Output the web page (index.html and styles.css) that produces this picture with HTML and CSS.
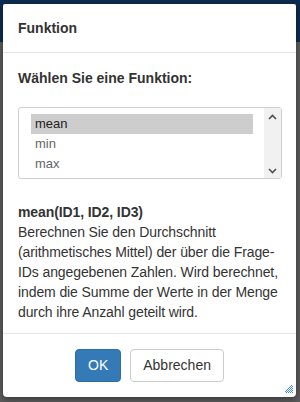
FILE: index.html
```html
<!DOCTYPE html>
<html lang="de">
<head>
<meta charset="utf-8">
<title>Funktion</title>
<link rel="stylesheet" href="styles.css">
</head>
<body>
<div class="backdrop">
  <div class="topbar"></div>
  <div class="page"></div>
</div>
<div class="modal">
  <div class="modal-header">
    <h4 class="modal-title">Funktion</h4>
  </div>
  <div class="modal-body">
    <div class="label">Wählen Sie eine Funktion:</div>
    <div class="listbox">
      <ul class="options">
        <li class="option selected">mean</li>
        <li class="option">min</li>
        <li class="option">max</li>
      </ul>
      <div class="scrollbar">
        <svg class="arrow" width="9" height="6" viewBox="0 0 9 6"><path d="M1 5 L4.5 1.5 L8 5" fill="none" stroke="#505050" stroke-width="1.6"/></svg>
        <svg class="arrow" width="9" height="6" viewBox="0 0 9 6"><path d="M1 1 L4.5 4.5 L8 1" fill="none" stroke="#505050" stroke-width="1.6"/></svg>
      </div>
    </div>
    <div class="desc">
      <div class="sig">mean(ID1, ID2, ID3)</div>
      <div class="text">Berechnen Sie den Durchschnitt (arithmetisches Mittel) der über die Frage-IDs angegebenen Zahlen. Wird berechnet, indem die Summe der Werte in der Menge durch ihre Anzahl geteilt wird.</div>
    </div>
  </div>
  <div class="modal-footer">
    <button class="btn btn-primary">OK</button>
    <button class="btn btn-default">Abbrechen</button>
  </div>
  <svg class="resize" width="8" height="8" viewBox="0 0 8 8">
    <g fill="#3d8fe0">
      <rect x="6" y="0" width="1" height="1"/>
      <rect x="5" y="1" width="1" height="1"/><rect x="7" y="1" width="1" height="1"/>
      <rect x="4" y="2" width="1" height="1"/><rect x="6" y="2" width="1" height="1"/>
      <rect x="3" y="3" width="1" height="1"/><rect x="5" y="3" width="1" height="1"/><rect x="7" y="3" width="1" height="1"/>
      <rect x="2" y="4" width="1" height="1"/><rect x="4" y="4" width="1" height="1"/><rect x="6" y="4" width="1" height="1"/>
      <rect x="1" y="5" width="1" height="1"/><rect x="3" y="5" width="1" height="1"/><rect x="5" y="5" width="1" height="1"/><rect x="7" y="5" width="1" height="1"/>
      <rect x="0" y="6" width="1" height="1"/><rect x="2" y="6" width="1" height="1"/><rect x="4" y="6" width="1" height="1"/><rect x="6" y="6" width="1" height="1"/>
      <rect x="1" y="7" width="1" height="1"/><rect x="3" y="7" width="1" height="1"/><rect x="5" y="7" width="1" height="1"/><rect x="7" y="7" width="1" height="1"/>
    </g>
  </svg>
</div>
</body>
</html>
```
FILE: styles.css
```css
html, body {
  margin: 0;
  padding: 0;
  width: 300px;
  height: 402px;
  overflow: hidden;
  font-family: "Liberation Sans", Arial, sans-serif;
  color: #333;
}

.backdrop {
  display: flex;
  flex-direction: column;
  height: 402px;
}

.topbar {
  height: 42px;
  background: #0c2c50;
}

.page {
  flex: 1;
  background: #5b5b5b;
}

.modal {
  position: absolute;
  left: 3px;
  top: 4px;
  width: 293px;
  height: 393px;
  background: #fff;
  border-radius: 2px 2px 4px 4px;
  box-shadow: 0 2px 6px rgba(0, 0, 0, 0.4);
  display: flex;
  flex-direction: column;
}

.modal-header {
  padding: 14px 15px;
  border-bottom: 1px solid #e5e5e5;
}

.modal-title {
  margin: 0;
  font-size: 14px;
  font-weight: bold;
  line-height: 20px;
}

.modal-body {
  padding: 15px 12px 10px 15px;
  flex: 1;
}

.label {
  font-size: 14px;
  font-weight: bold;
  line-height: 20px;
  margin-bottom: 19px;
}

.listbox {
  display: flex;
  height: 70px;
  margin-right: 2px;
  border: 1px solid #cfcfcf;
  border-radius: 3px;
}

.options {
  list-style: none;
  margin: 0;
  padding: 6px 11px 0 12px;
  flex: 1;
}

.option {
  font-size: 13px;
  line-height: 20px;
  padding: 0 4px;
  color: #666;
}

.option.selected {
  background: #cdcdcd;
  color: #222;
}

.scrollbar {
  width: 17px;
  background: #f1f1f1;
  display: flex;
  flex-direction: column;
  justify-content: space-between;
  align-items: center;
  padding: 6px 0 4px;
}

.desc {
  margin-top: 23px;
  font-size: 14px;
  line-height: 20px;
  letter-spacing: -0.1px;
}

.sig {
  font-weight: bold;
}

.modal-footer {
  border-top: 1px solid #e5e5e5;
  padding: 15px;
  display: flex;
  justify-content: center;
  gap: 9px;
}

.btn {
  font-family: "Liberation Sans", Arial, sans-serif;
  font-size: 14px;
  line-height: 19px;
  padding: 6px 12px;
  border-radius: 4px;
  border: 1px solid #ccc;
  background: #fff;
  color: #333;
}

.btn-primary {
  background: #337ab7;
  border-color: #2e6da4;
  color: #fff;
}

.resize {
  position: absolute;
  right: 3px;
  bottom: 4px;
}
```
